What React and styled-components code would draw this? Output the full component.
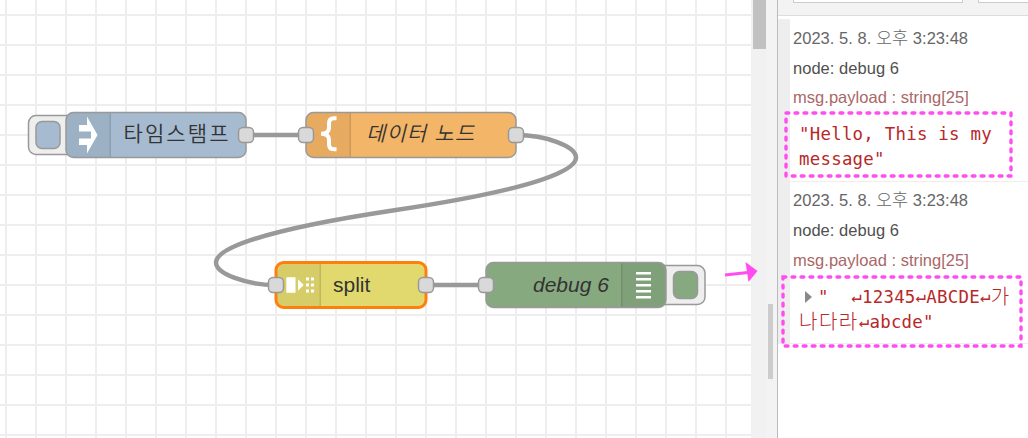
import React from "react";
import styled, { createGlobalStyle, css } from "styled-components";

const GlobalStyle = createGlobalStyle`
  * {
    box-sizing: border-box;
  }
  body {
    margin: 0;
    background: #fff;
    font-family: "Liberation Sans", "Noto Sans CJK KR", sans-serif;
  }
`;

const wires = [
  "M246 135H306",
  "M516 135C546 135 576 146.25 576 157.5S546 187.5 396 210S216 251.25 216 262.5S246 285 276 285",
  "M426 285H486",
];

const nodes = [
  {
    id: "inject",
    x: 66,
    y: 112.5,
    width: 180,
    fill: "#a6bbcf",
    label: "타임스탬프",
    labelX: 123.5,
    labelY: 28,
    labelWidth: 105,
    output: true,
    button: "left",
    icon: (
      <path
        fill="#fff"
        d="M87 116.5L97.5 135L87 153.5V145H79V138.5H91V131.5H79V125H87Z"
      />
    ),
  },
  {
    id: "template",
    x: 306,
    y: 112.5,
    width: 210,
    fill: "#f3b567",
    label: "데이터 노드",
    labelX: 366,
    labelY: 28,
    labelWidth: 108,
    italic: true,
    input: true,
    output: true,
    icon: (
      <path
        fill="none"
        stroke="#fff"
        strokeWidth="4"
        d="M336.5 118.3h-2.5q-5 0-5 5v4.5q0 6-8 6q8 0 8 6v4.5q0 5 5 5h2.5"
      />
    ),
  },
  {
    id: "split",
    x: 276,
    y: 262.5,
    width: 150,
    fill: "#e2d96e",
    label: "split",
    labelX: 333,
    labelY: 29.5,
    selected: true,
    input: true,
    output: true,
    icon: (
      <path
        fill="#fff"
        d="M286.3 277.3h9.2v15.5h-9.2zM298 279.3l5.7 5.7l-5.7 5.7zM306 277.5h3v3h-3zM311 277.5h3v3h-3zM306 283.5h3v3h-3zM311 283.5h3v3h-3zM306 289.5h3v3h-3zM311 289.5h3v3h-3z"
      />
    ),
  },
  {
    id: "debug",
    x: 486,
    y: 262.5,
    width: 180,
    fill: "#87a980",
    label: "debug 6",
    labelX: 533,
    labelY: 29.5,
    italic: true,
    input: true,
    iconRight: true,
    button: "right",
    icon: (
      <path
        stroke="#fff"
        strokeWidth="2.4"
        d="M636 273.3h15M636 279.3h15M636 285.3h15M636 291.3h15M636 297.3h15"
      />
    ),
  },
];

const FlowNode = ({ node }) => {
  const { x, y, width, fill } = node;
  const buttonX = node.button === "left" ? x - 37.5 : x + width - 9;
  const buttonFaceX = node.button === "left" ? x - 30 : x + width + 7.5;
  const shadeX = node.iconRight ? x + width - 45 : x;
  const dividerX = node.iconRight ? shadeX + 0.75 : x + 44.25;

  return (
    <g>
      {node.button && (
        <>
          <ButtonFrame x={buttonX} y={y + 3} width="48" height="39" rx="7.5" />
          <ButtonFace
            x={buttonFaceX}
            y={y + 9}
            width="24"
            height="27"
            rx="6"
            $fill={fill}
          />
        </>
      )}
      <NodeBody x={x} y={y} width={width} height="45" rx="7.5" $fill={fill} />
      <clipPath id={node.id}>
        <rect x={x} y={y} width={width} height="45" rx="7.5" />
      </clipPath>
      <g clipPath={`url(#${node.id})`}>
        <IconShade x={shadeX} y={y} width="45" height="45" />
        <Divider d={`M${dividerX} ${y}v45`} />
      </g>
      <NodeOutline
        x={x}
        y={y}
        width={width}
        height="45"
        rx="7.5"
        $selected={node.selected}
      />
      {node.icon}
      <Label
        x={node.labelX}
        y={y + node.labelY}
        textLength={node.labelWidth}
        $italic={node.italic}
      >
        {node.label}
      </Label>
      {node.input && (
        <Port x={x - 7.5} y={y + 15} width="15" height="15" rx="4.5" />
      )}
      {node.output && (
        <Port x={x + width - 7.5} y={y + 15} width="15" height="15" rx="4.5" />
      )}
    </g>
  );
};

const Message = ({ children }) => (
  <MessageRow>
    <Meta>
      2023. 5. 8. <Hangul>오후</Hangul> 3:23:48
    </Meta>
    <Meta $color="#505050">node: debug 6</Meta>
    <Meta $color="#aa6767" $last>
      msg.payload : string[25]
    </Meta>
    <Payload>{children}</Payload>
  </MessageRow>
);

const App = () => {
  return (
    <>
      <GlobalStyle />
      <Editor>
        <Workspace>
          <svg width="751" height="438">
            {wires.map((d) => (
              <Wire key={d} d={d} />
            ))}
            {nodes.map((node) => (
              <FlowNode key={node.id} node={node} />
            ))}
          </svg>
        </Workspace>
        <ScrollTrack>
          <ScrollThumb />
        </ScrollTrack>
        <Separator>
          <Grip />
        </Separator>
        <Sidebar>
          <Toolbar>
            <ToolbarBox $width="170px" />
            <ToolbarBox $width="120px" />
          </Toolbar>
          <Messages>
            <Message>
              <Line>"Hello, This is my</Line>
              <Line>message"</Line>
            </Message>
            <Message>
              <Line>
                <Caret />
                "<Gap />
                <Return>↵</Return>12345<Return>↵</Return>ABCDE
                <Return>↵</Return>
                <PayloadHangul>가</PayloadHangul>
              </Line>
              <Line>
                <PayloadHangul>나다라</PayloadHangul>
                <Return>↵</Return>abcde"
              </Line>
            </Message>
          </Messages>
        </Sidebar>
        <Annotations width="1028" height="438">
          <Highlight x="786" y="113" width="225" height="63" />
          <Highlight x="783" y="277" width="238" height="69" />
          <path d="M725 275L748 272.5" stroke="#ff4df0" strokeWidth="3" />
          <path d="M745.5 262L757.5 271L748.5 282Z" fill="#ff4df0" />
        </Annotations>
      </Editor>
    </>
  );
};

export default App;

const Editor = styled.main`
  position: relative;
  display: flex;
  width: 1028px;
  height: 438px;
  overflow: hidden;
`;

const Workspace = styled.section`
  flex: none;
  width: 751px;
  background-color: #fff;
  background-image: linear-gradient(#eee 2px, transparent 2px),
    linear-gradient(90deg, #eee 2px, transparent 2px);
  background-size: 30px 30px;
  background-position: 5px 14px;

  svg {
    display: block;
  }
`;

const Wire = styled.path`
  fill: none;
  stroke: #999;
  stroke-width: 4.5px;
`;

const outline = css`
  stroke: #999;
  stroke-width: 1.5px;
`;

const NodeBody = styled.rect`
  fill: ${({ $fill }) => $fill};
`;

const NodeOutline = styled.rect`
  fill: none;
  stroke: ${({ $selected }) => ($selected ? "#ff7f0e" : "#999")};
  stroke-width: ${({ $selected }) => ($selected ? "3px" : "1.5px")};
`;

const ButtonFrame = styled.rect`
  ${outline}
  fill: #eee;
`;

const ButtonFace = styled.rect`
  ${outline}
  fill: ${({ $fill }) => $fill};
`;

const Port = styled.rect`
  ${outline}
  fill: #d9d9d9;
`;

const IconShade = styled.rect`
  fill: #000;
  fill-opacity: 0.05;
`;

const Divider = styled.path`
  stroke: #000;
  stroke-opacity: 0.1;
  stroke-width: 1.5px;
`;

const Label = styled.text`
  fill: #333;
  font-size: 21px;
  font-weight: 350;
  font-style: ${({ $italic }) => ($italic ? "italic" : "normal")};
`;

const ScrollTrack = styled.div`
  flex: none;
  width: 15px;
  padding-left: 2px;
  background: #f1f1f1;
`;

const ScrollThumb = styled.div`
  height: 49px;
  background: #c1c1c1;
`;

const Separator = styled.div`
  display: flex;
  flex: none;
  width: 11px;
  padding: 304px 0 59px 2px;
  background: #f3f3f3;
`;

const Grip = styled.div`
  width: 5px;
  background: #ccc;
`;

const Sidebar = styled.aside`
  display: flex;
  flex-direction: column;
  flex: none;
  width: 251px;
  border-left: 1px solid #bbb;
  background: #fff;
`;

const Toolbar = styled.div`
  display: flex;
  gap: 15px;
  height: 16px;
  flex: none;
  padding-left: 15px;
  background: #f3f3f3;
  border-bottom: 1px solid #ddd;
  overflow: hidden;
`;

const ToolbarBox = styled.div`
  flex: none;
  width: ${({ $width }) => $width};
  height: 3px;
  border: 1px solid #ccc;
  border-top: 0;
  background: #fff;
`;

const Messages = styled.div`
  padding-top: 3px;
`;

const MessageRow = styled.div`
  height: 163px;
  padding: 4px 0 0 3px;
  border-left: 12px solid #eee;
  border-bottom: 1px solid #eee;

  & + & {
    height: 162px;
    padding-top: 3px;
  }
`;

const Meta = styled.div`
  height: ${({ $last }) => ($last ? "28px" : "30px")};
  line-height: ${({ $last }) => ($last ? "29px" : "30px")};
  font-size: 16.5px;
  letter-spacing: 0.03px;
  white-space: pre;
  color: ${({ $color }) => $color || "#666"};

  ${MessageRow} + ${MessageRow} & {
    line-height: 30px;
  }
`;

const Hangul = styled.span`
  font-size: 17.5px;
  font-weight: 300;
`;

const Payload = styled.div`
  padding: 11px 0 0 6px;
  font-family: "DejaVu Sans Mono", "Noto Sans CJK KR", monospace;
  font-size: 17.4px;
  letter-spacing: 0.25px;
  white-space: nowrap;
  color: #b72828;

  ${MessageRow} + ${MessageRow} & {
    padding-top: 12px;
  }
`;

const Line = styled.div`
  height: 25px;
  line-height: 25px;
`;

const Return = styled.span`
  line-height: 10px;
  vertical-align: 1px;
`;

const PayloadHangul = styled.span`
  font-family: "Noto Sans CJK KR", sans-serif;
  font-weight: 300;
  font-size: 20px;
  line-height: 10px;
  letter-spacing: 1.5px;
  vertical-align: -1px;
`;

const Caret = styled.i`
  display: inline-block;
  margin: 0 6px 0 6px;
  border: solid transparent;
  border-width: 6px 0 6px 7px;
  border-left-color: #888;
`;

const Gap = styled.span`
  display: inline-block;
  width: 22.5px;
`;

const Annotations = styled.svg`
  position: absolute;
  inset: 0;
  pointer-events: none;
`;

const Highlight = styled.rect`
  fill: none;
  stroke: #ff4df0;
  stroke-width: 3.4px;
  stroke-linecap: round;
  stroke-dasharray: 2.8 6.2;
`;
